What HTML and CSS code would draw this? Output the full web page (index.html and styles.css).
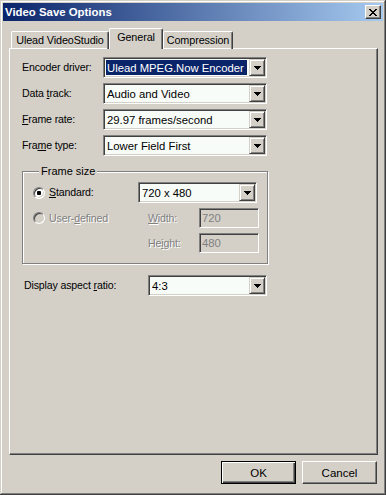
FILE: index.html
```html
<!DOCTYPE html>
<html lang="en">
<head>
    <meta charset="UTF-8">
    <meta name="viewport" content="width=device-width, initial-scale=1.0">
    <title>Video Save Options</title>
    <link rel="stylesheet" href="styles.css">
</head>
<body>
    <div class="window">
        <div class="titlebar">
            <span class="title">Video Save Options</span>
            <span class="close-btn">
                <svg width="8" height="7" viewBox="0 0 8 7" shape-rendering="crispEdges">
                    <path d="M0 0h2v1h-2z M6 0h2v1h-2z M1 1h2v1h-2z M5 1h2v1h-2z M2 2h4v1h-4z M3 3h2v1h-2z M2 4h4v1h-4z M1 5h2v1h-2z M5 5h2v1h-2z M0 6h2v1h-2z M6 6h2v1h-2z" fill="#000"/>
                </svg>
            </span>
        </div>

        <div class="tabs">
            <div class="tab tab-studio">Ulead VideoStudio</div>
            <div class="tab tab-general active">General</div>
            <div class="tab tab-compression">Compression</div>
        </div>

        <div class="panel">
            <div class="form-rows">
                <label class="field-label">Encoder driver:</label>
                <div class="combo">
                    <span class="combo-text"><span class="selected">Ulead MPEG.Now Encoder</span></span>
                    <span class="drop"><svg width="7" height="4" shape-rendering="crispEdges"><path d="M0 0h7v1h-7z M1 1h5v1h-5z M2 2h3v1h-3z M3 3h1v1h-1z" fill="#000"/></svg></span>
                </div>

                <label class="field-label">Data <u>t</u>rack:</label>
                <div class="combo">
                    <span class="combo-text">Audio and Video</span>
                    <span class="drop"><svg width="7" height="4" shape-rendering="crispEdges"><path d="M0 0h7v1h-7z M1 1h5v1h-5z M2 2h3v1h-3z M3 3h1v1h-1z" fill="#000"/></svg></span>
                </div>

                <label class="field-label"><u>F</u>rame rate:</label>
                <div class="combo">
                    <span class="combo-text">29.97 frames/second</span>
                    <span class="drop"><svg width="7" height="4" shape-rendering="crispEdges"><path d="M0 0h7v1h-7z M1 1h5v1h-5z M2 2h3v1h-3z M3 3h1v1h-1z" fill="#000"/></svg></span>
                </div>

                <label class="field-label">Fra<u>m</u>e type:</label>
                <div class="combo">
                    <span class="combo-text">Lower Field First</span>
                    <span class="drop"><svg width="7" height="4" shape-rendering="crispEdges"><path d="M0 0h7v1h-7z M1 1h5v1h-5z M2 2h3v1h-3z M3 3h1v1h-1z" fill="#000"/></svg></span>
                </div>
            </div>

            <div class="group">
                <div class="legend">Frame size</div>
                <div class="group-grid">
                    <div class="radio-item">
                        <span class="radio checked"><span class="dot"></span></span>
                        <span class="radio-label"><u>S</u>tandard:</span>
                    </div>
                    <div class="combo combo-std">
                        <span class="combo-text">720 x 480</span>
                        <span class="drop"><svg width="7" height="4" shape-rendering="crispEdges"><path d="M0 0h7v1h-7z M1 1h5v1h-5z M2 2h3v1h-3z M3 3h1v1h-1z" fill="#000"/></svg></span>
                    </div>

                    <div class="radio-item disabled">
                        <span class="radio off"></span>
                        <span class="radio-label">User-<u>d</u>efined</span>
                    </div>
                    <span class="sub-label disabled"><u>W</u>idth:</span>
                    <span class="textbox">720</span>

                    <span></span>
                    <span class="sub-label disabled">He<u>i</u>ght:</span>
                    <span class="textbox">480</span>
                </div>
            </div>

            <div class="aspect-row">
                <label class="field-label">Display aspect <u>r</u>atio:</label>
                <div class="combo combo-aspect">
                    <span class="combo-text">4:3</span>
                    <span class="drop"><svg width="7" height="4" shape-rendering="crispEdges"><path d="M0 0h7v1h-7z M1 1h5v1h-5z M2 2h3v1h-3z M3 3h1v1h-1z" fill="#000"/></svg></span>
                </div>
            </div>
        </div>

        <div class="buttons">
            <div class="btn default"><span class="btn-inner">OK</span></div>
            <div class="btn"><span class="btn-inner">Cancel</span></div>
        </div>
    </div>
</body>
</html>
```
FILE: styles.css
```css
body {
    margin: 0;
    background: #d4d0c8;
    font-family: "Liberation Sans", Arial, sans-serif;
    font-size: 11px;
    color: #000;
}

.window {
    width: 386px;
    height: 495px;
    box-sizing: border-box;
    padding: 3px;
    background: #d4d0c8;
    box-shadow: inset -1px -1px 0 #404040, inset 1px 1px 0 #d4d0c8,
                inset -2px -2px 0 #808080, inset 2px 2px 0 #fff;
}

/* Title bar */
.titlebar {
    height: 18px;
    display: flex;
    align-items: center;
    justify-content: space-between;
    padding: 0 2px 0 2px;
    background: linear-gradient(to right, #0a246a, #a6caf0);
}

.title {
    color: #fff;
    font-weight: bold;
    font-size: 11.4px;
}

.close-btn {
    width: 16px;
    height: 14px;
    box-sizing: border-box;
    display: flex;
    align-items: center;
    justify-content: center;
    background: #d4d0c8;
    border: 1px solid;
    border-color: #fff #404040 #404040 #fff;
    box-shadow: inset -1px -1px 0 #808080;
}

/* Tabs */
.tabs {
    display: flex;
    align-items: flex-end;
    height: 20px;
    margin: 8px 0 -1px 6px;
}

.tab {
    height: 18px;
    box-sizing: border-box;
    border: 1px solid;
    border-color: #fff #404040 transparent #fff;
    border-bottom: none;
    border-radius: 2px 2px 0 0;
    box-shadow: inset -1px 0 0 #808080;
    display: flex;
    justify-content: center;
    padding-top: 2px;
    font-size: 10.8px;
    letter-spacing: -0.1px;
}

.tab-studio {
    width: 98px;
    margin-left: 2px;
}

.tab-general {
    width: 54px;
}

.tab-compression {
    width: 70px;
}

.tab.active {
    height: 21px;
    position: relative;
    z-index: 1;
    background: #d4d0c8;
    padding-top: 2px;
}

/* Panel */
.panel {
    width: 369px;
    height: 407px;
    box-sizing: border-box;
    margin-left: 6px;
    border: 1px solid;
    border-color: #fff #404040 #404040 #fff;
    box-shadow: inset -1px -1px 0 #808080;
    padding: 8px 0 0 12px;
}

.form-rows {
    display: grid;
    grid-template-columns: 81px 164px;
    grid-auto-rows: 21px;
    row-gap: 5px;
}

.field-label,
.radio-label,
.sub-label {
    line-height: 21px;
    font-size: 10.6px;
    letter-spacing: -0.15px;
    white-space: nowrap;
}

/* Combo box */
.combo {
    height: 21px;
    box-sizing: border-box;
    display: flex;
    border: 1px solid;
    border-color: #808080 #fff #fff #808080;
    box-shadow: inset 1px 1px 0 #404040, inset -1px -1px 0 #d4d0c8;
    background: #f8fcf8;
    padding: 1px;
}

.combo-text {
    flex: 1;
    display: flex;
    align-items: center;
    padding: 1px 0 1px 2px;
    font-size: 11.3px;
    white-space: nowrap;
    overflow: hidden;
}

.selected {
    align-self: stretch;
    display: flex;
    align-items: center;
    background: #0a246a;
    color: #fff;
    margin: 0 2px 0 -1px;
    padding-left: 1px;
    width: 100%;
}

.drop {
    width: 16px;
    height: 17px;
    box-sizing: border-box;
    display: flex;
    align-items: center;
    justify-content: center;
    background: #d4d0c8;
    border: 1px solid;
    border-color: #d4d0c8 #404040 #404040 #d4d0c8;
    box-shadow: inset 1px 1px 0 #fff, inset -1px -1px 0 #808080;
}

/* Frame size group */
.group {
    width: 246px;
    box-sizing: border-box;
    margin-top: 15px;
    border: 1px solid #808080;
    box-shadow: 1px 1px 0 #fff, inset 1px 1px 0 #fff;
    padding: 0 0 10px 10px;
}

.legend {
    width: fit-content;
    height: 13px;
    line-height: 13px;
    margin: -7px 0 0 6px;
    padding: 0 2px;
    background: #d4d0c8;
    font-size: 11px;
}

.group-grid {
    display: grid;
    grid-template-columns: 105px 61px 60px;
    grid-template-rows: 21px 20px 20px;
    row-gap: 5px;
    margin-top: 4px;
}

.radio-item {
    display: flex;
    align-items: center;
    gap: 4px;
}

.radio {
    width: 12px;
    height: 12px;
    box-sizing: border-box;
    border-radius: 50%;
    border: 1px solid;
    border-color: #808080 #fff #fff #808080;
    box-shadow: inset 1px 1px 0 #404040, inset -1px -1px 0 #d4d0c8;
    background: #fff;
    display: flex;
    align-items: center;
    justify-content: center;
}

.radio.off {
    background: #d4d0c8;
}

.dot {
    width: 4px;
    height: 4px;
    border-radius: 1px;
    background: #000;
}

.combo-std {
    grid-column: 2 / 4;
    width: 119px;
}

.sub-label {
    line-height: 20px;
    padding-left: 10px;
}

.disabled {
    color: #808080;
    text-shadow: 1px 1px 0 #fff;
}

.textbox {
    height: 20px;
    box-sizing: border-box;
    display: flex;
    align-items: center;
    padding-left: 2px;
    border: 1px solid;
    border-color: #808080 #fff #fff #808080;
    box-shadow: inset 1px 1px 0 #404040, inset -1px -1px 0 #d4d0c8;
    color: #808080;
    font-size: 11.3px;
}

.aspect-row {
    display: grid;
    grid-template-columns: 124px 119px;
    margin: 11px 0 0 2px;
}

/* Buttons */
.buttons {
    display: flex;
    justify-content: flex-end;
    gap: 6px;
    margin: 6px 6px 0 0;
}

.btn {
    width: 75px;
    height: 23px;
    box-sizing: border-box;
    display: flex;
    align-items: center;
    justify-content: center;
    border: 1px solid;
    border-color: #fff #404040 #404040 #fff;
    box-shadow: inset -1px -1px 0 #808080;
    font-size: 11.5px;
}

.btn.default {
    border: 1px solid #000;
    box-shadow: inset 1px 1px 0 #fff, inset -1px -1px 0 #404040, inset -2px -2px 0 #808080;
}
```
